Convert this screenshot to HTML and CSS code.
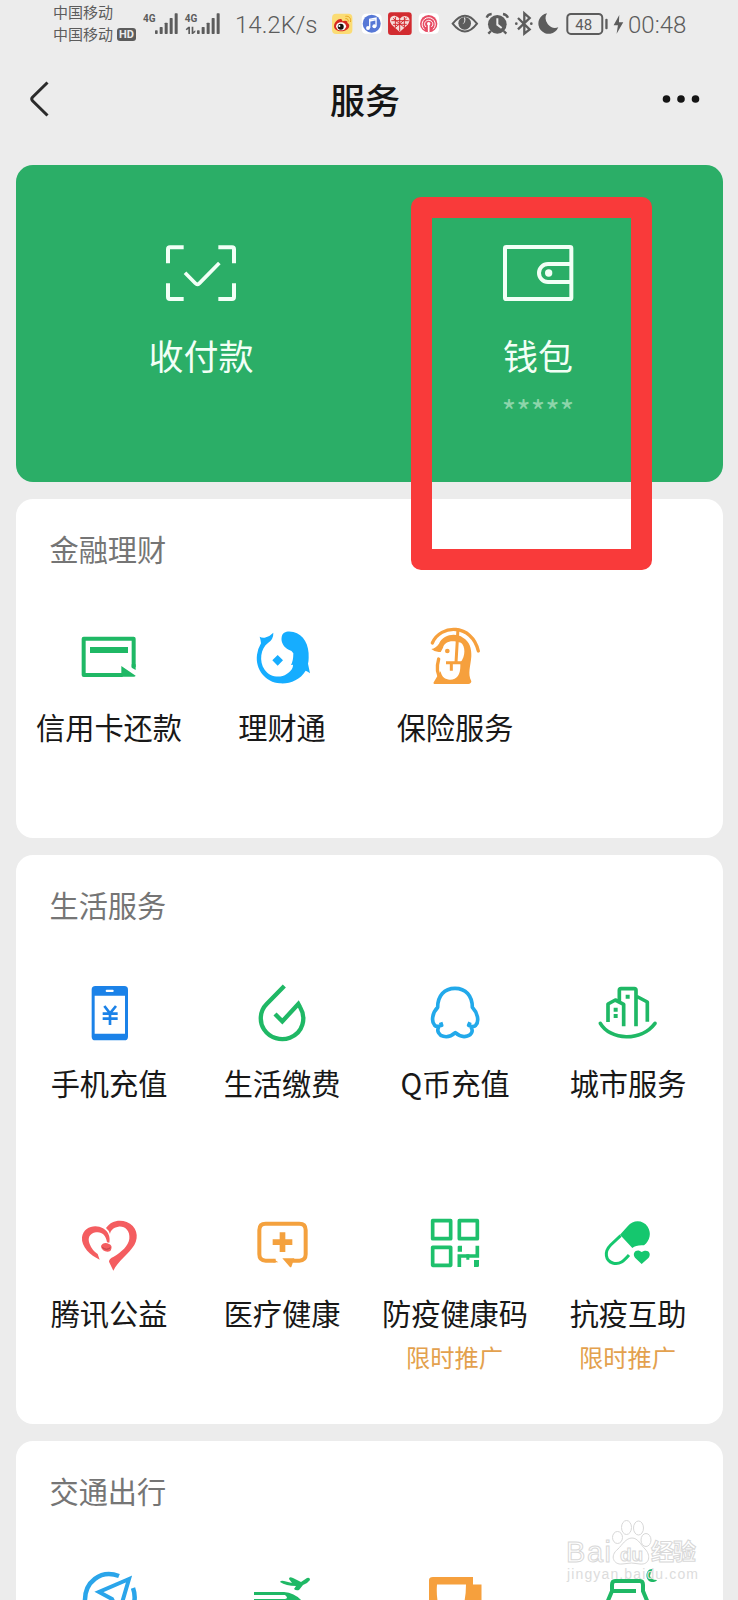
FILE: index.html
```html
<!DOCTYPE html>
<html lang="zh-CN">
<head>
<meta charset="utf-8">
<title>服务</title>
<link rel="stylesheet" href="styles.css">
</head>
<body>
<div class="screen">
  <header class="status">
    <div class="carriers">
      <div class="carrier">中国移动</div>
      <div class="carrier">中国移动<span class="hd">HD</span></div>
    </div>
    <svg class="signals" viewBox="306 30 240 80">
      <g fill="#5c5c5c">
        <text x="309" y="66" class="net">4G</text>
        <text x="434" y="66" class="net">4G</text>
        <rect x="345" y="91" width="8" height="11" rx="2"/><rect x="359" y="81" width="9" height="21" rx="2"/><rect x="374" y="68" width="9" height="34" rx="2"/><rect x="389" y="54" width="9" height="48" rx="2"/><rect x="404" y="40" width="9" height="62" rx="2"/>
        <rect x="471" y="91" width="8" height="11" rx="2"/><rect x="485" y="81" width="9" height="21" rx="2"/><rect x="500" y="68" width="9" height="34" rx="2"/><rect x="515" y="54" width="9" height="48" rx="2"/><rect x="530" y="40" width="9" height="62" rx="2"/>
        <path d="M437 88L445 80H450V102H445V87L440 91ZM455 80H460V95L466 91V96L459 102H455Z"/>
      </g>
    </svg>
    <span class="speed">14.2K/s</span>
    <svg class="tray" viewBox="30 30 885 80">
      <rect x="36" y="41" width="61" height="61" rx="12" fill="#fbdc74"/>
      <path d="M42 79C42 66 57 54 64 58C67 60 66 63 67 64C75 60 84 62 82 69C90 72 89 82 82 88C71 98 42 96 42 79Z" fill="#d5281f"/>
      <ellipse cx="63" cy="79" rx="15" ry="12" fill="#fff"/><circle cx="62" cy="80" r="9" fill="#18120f"/><circle cx="58" cy="78" r="3" fill="#fff"/>
      <path d="M76 49C87 47 94 55 91 66M76 56C83 55 86 60 84 65" fill="none" stroke="#e5a11c" stroke-width="3"/>
      <rect x="125" y="41" width="60" height="60" rx="13" fill="#fff"/><circle cx="155" cy="71" r="27" fill="#5778d6"/>
      <path d="M149 84V58L168 54V79M149 63L168 59" fill="none" stroke="#fff" stroke-width="4"/><circle cx="144" cy="84" r="6" fill="#fff"/><circle cx="163" cy="79" r="6" fill="#fff"/>
      <rect x="204" y="37" width="71" height="68" rx="9" fill="#d22b30"/>
      <path d="M239 96L215 74C203 58 214 45 226 48Q235 49 239 57Q245 48 254 48C267 48 274 60 263 74Z" fill="#f6dcda"/>
      <path d="M214 62H266M219 73H260M239 57V94M226 51V81M253 51V81M219 55L254 83M260 54L225 83" stroke="#d22b30" stroke-width="3" fill="none"/>
      <rect x="296" y="40" width="61" height="61" rx="13" fill="#fff"/><circle cx="326" cy="71" r="26" fill="#e74c64"/>
      <g fill="none" stroke="#fff" stroke-width="3"><path d="M313 88C300 76 307 53 326 53S352 76 339 88M318 81C309 73 315 61 326 61S343 73 334 81"/><path d="M326 70V97" stroke-width="5"/></g><circle cx="326" cy="71" r="5" fill="#fff"/>
      <path d="M398 71Q435 23 471 71Q435 118 398 71Z" fill="none" stroke="#5c5c5c" stroke-width="6"/><circle cx="434" cy="70" r="19" fill="#5c5c5c"/><path d="M434 51A15 15 0 0 1 427 73A16 16 0 0 0 432 55Z" fill="#ececec"/>
      <circle cx="532" cy="73" r="28" fill="#5c5c5c"/><path d="M500 53Q503 43 515 42M549 42Q560 44 564 53M513 93L505 101M551 93L559 101" fill="none" stroke="#5c5c5c" stroke-width="7"/><path d="M532 55V74L545 84" fill="none" stroke="#ececec" stroke-width="6"/>
      <path d="M594 54L629 88L613 101V40L629 54L594 88" fill="none" stroke="#5c5c5c" stroke-width="7"/><circle cx="589" cy="71" r="4" fill="#5c5c5c"/><circle cx="634" cy="71" r="4" fill="#5c5c5c"/>
      <path d="M681 40A31 31 0 1 0 715 82A29 29 0 0 1 681 40Z" fill="#5c5c5c"/>
      <rect x="742" y="42" width="105" height="60" rx="11" fill="none" stroke="#5c5c5c" stroke-width="6"/><rect x="856" y="56" width="7" height="32" rx="3" fill="#5c5c5c"/>
      <text x="766" y="89" class="level">48</text>
      <path d="M898 45L881 76H894L890 101L910 67H897Z" fill="#5c5c5c"/>
    </svg>
    <span class="time">00:48</span>
  </header>

  <nav class="navbar">
    <svg class="back" viewBox="0 0 24 40"><path d="M20.500 3.500L5.500 18.300Q4 20 5.500 21.700L20.500 36.500" fill="none" stroke="#2b2b2b" stroke-width="3"/></svg>
    <h1 class="title">服务</h1>
    <svg class="more" viewBox="0 0 40 10" fill="#151515"><circle cx="5.500" cy="5" r="3.800"/><circle cx="20" cy="5" r="3.800"/><circle cx="34.500" cy="5" r="3.800"/></svg>
  </nav>

  <main class="cards">
    <section class="pay">
      <div class="pay-item">
        <svg class="pay-icon" viewBox="104 68 216 180" fill="none" stroke="#f2fff6" stroke-width="12"><path d="M113 129V87Q113 81 119 81H160M264 81H305Q311 81 311 87V129M311 189V230Q311 236 305 236H264M160 236H119Q113 236 113 230V189"/><path d="M164 157L195 189Q201 195 207 189L267 128" stroke-width="11"/></svg>
        <span class="pay-label">收付款</span>
      </div>
      <div class="pay-item">
        <svg class="pay-icon" viewBox="303 189 216 180" fill="none" stroke="#f2fff6" stroke-width="12"><rect x="312" y="201" width="199" height="156" rx="4"/><path d="M511 252H441A27 27 0 0 0 441 306H511"/><circle cx="443" cy="279" r="11" fill="#f2fff6" stroke="none"/></svg>
        <span class="pay-label">钱包</span>
        <span class="stars">*****</span>
      </div>
    </section>

    <section class="card">
      <h2 class="heading">金融理财</h2>
      <div class="grid">
        <div class="item">
          <svg class="icon" viewBox="141 77 192 192"><path d="M311 203V118H161V227H278" fill="none" stroke="#1fb865" stroke-width="12" stroke-linejoin="round"/><path d="M180 143H294V161H180ZM274 200L317 229Q316 232 311 232H274ZM305 195H317V212L305 205Z" fill="#1fb865"/></svg>
          <span class="label">信用卡还款</span>
        </div>
        <div class="item">
          <svg class="icon" viewBox="660 77 192 192"><path d="M689 112Q694 116 704 115Q719 112 730 100Q731 119 714 131C692 146 686 187 704 211C719 233 750 238 770 224C786 213 789 205 789 196L783 197Q790 185 790 162Q786 153 776 151C762 145 752 129 755 113C757 97 774 94 790 98C821 105 838 137 836 175Q836 185 834 193L840 222Q833 216 827 214C810 242 780 254 750 252C707 249 675 210 681 166Q684 147 693 132Q692 121 689 112ZM743 167L759 183L743 199L727 183Z" fill="#16adff"/></svg>
          <span class="label">理财通</span>
        </div>
        <div class="item">
          <svg class="icon" viewBox="129 77 192 192"><path d="M154 149Q168 146 177 133C189 106 226 99 249 115C269 126 275 148 274 171C272 201 262 222 274 246Q274 253 265 254H167Q157 254 162 247L174 227L190 205L189 158H176Q164 158 154 149Z" fill="#f6a03d"/><path d="M224 126C205 124 192 132 189 145L181 160V213C184 233 196 241 210 241C232 241 241 225 241 200V190C258 170 256 140 243 130Z" fill="#fff"/><g fill="none" stroke="#f6a03d" stroke-width="10"><path d="M157 131C181 74 276 72 295 155M176 179C169 204 170 225 184 240" stroke-linecap="round"/><path d="M234 87L228 190M198 190H246M214 190V214" stroke-width="9"/></g><circle cx="202" cy="155" r="7" fill="#f6a03d"/></svg>
          <span class="label">保险服务</span>
        </div>
      </div>
    </section>

    <section class="card">
      <h2 class="heading">生活服务</h2>
      <div class="grid">
        <div class="item">
          <svg class="icon" viewBox="111 60 192 192"><rect x="155" y="75" width="109" height="163" rx="11" fill="#1b82e8"/><path d="M164 104H255V218H164Z" fill="#fff"/><rect x="197" y="86" width="24" height="7" rx="3" fill="#fff"/><path d="M193 135L210 157L228 135M210 157V192M188 158H233M188 173H233" fill="none" stroke="#1b82e8" stroke-width="8"/></svg>
          <span class="label">手机充值</span>
        </div>
        <div class="item">
          <svg class="icon" viewBox="630 60 192 192"><path d="M733 75L680 129C658 151 658 184 672 205C690 232 723 240 750 230C789 216 800 171 780 138L775 129L727 181L705 159" fill="none" stroke="#1fb865" stroke-width="13"/></svg>
          <span class="label">生活缴费</span>
        </div>
        <div class="item">
          <svg class="icon" viewBox="129 60 192 192"><path d="M182 184L185 193Q170 199 164 193C153 181 157 155 173 139C173 104 193 82 225 82S277 104 277 139C292 155 299 180 287 193Q280 200 266 193L270 184M176 198C169 210 178 223 190 226Q208 231 226 215Q244 231 262 225C276 221 280 209 273 198" fill="none" stroke="#22a9ea" stroke-width="11" stroke-linejoin="round"/></svg>
          <span class="label">Q币充值</span>
        </div>
        <div class="item">
          <svg class="icon" viewBox="648 60 192 192"><g fill="none" stroke="#1fb865" stroke-width="11" stroke-linejoin="round"><path d="M684 183V129L706 117L731 130V196M718 119V88Q718 83 723 83H763Q768 83 768 88V196M768 105L802 123V182"/><path d="M661 187C691 239 784 242 825 187" stroke-linecap="round"/></g><path d="M737 101H749V113H737ZM701 140H713V152H701ZM701 159H713V171H701Z" fill="#1fb865"/></svg>
          <span class="label">城市服务</span>
        </div>
        <div class="item">
          <svg class="icon" viewBox="111 61 192 192"><path d="M179 207C151 195 123 168 126 140C130 107 168 99 189 113C207 124 211 141 208 156L201 155C198 132 184 122 168 125C148 128 142 143 149 160Q156 179 173 190ZM198 112C212 91 238 85 260 94C290 106 298 137 283 163C266 191 235 210 220 240L207 213Q207 204 221 198C244 184 266 165 268 144C271 119 253 105 235 108C219 111 212 119 210 130Q206 118 198 112ZM183 166C187 157 197 155 207 160C217 163 216 173 211 181C200 187 184 180 183 166Z" fill="#f45d60"/><path d="M187 170Q199 181 211 171" stroke="#b83e45" stroke-width="3" fill="none"/></svg>
          <span class="label">腾讯公益</span>
        </div>
        <div class="item">
          <svg class="icon" viewBox="630 61 192 192"><path d="M707 210H677Q658 210 658 191V118Q658 99 677 99H778Q797 99 797 118V191Q797 210 778 210H757" fill="none" stroke="#f4a13e" stroke-width="12"/><path d="M719 125H736V146H757V163H736V184H719V163H698V146H719ZM699 204L715 215H699ZM727 203H763L754 229Q752 231 749 228Z" fill="#f4a13e"/></svg>
          <span class="label">医疗健康</span>
        </div>
        <div class="item">
          <svg class="icon" viewBox="159 61 192 192"><g fill="none" stroke="#1ec06c" stroke-width="11"><path d="M188 90H242V144H188ZM268 90H322V144H268ZM188 170H242V224H188Z" stroke-linejoin="round"/><path d="M263 196H322V165M268 191V229"/></g><path d="M263 168Q263 165 267 165H276V183H263ZM312 208H327V225Q327 229 323 229H312ZM289 191H298V207H289Z" fill="#1ec06c"/></svg>
          <span class="label">防疫健康码</span>
          <span class="sub">限时推广</span>
        </div>
        <div class="item">
          <svg class="icon" viewBox="678 61 192 192"><path d="M750 132L773 107C791 85 820 89 833 108C845 127 840 149 822 164Q799 162 787 172Z" fill="#15c76e"/><path d="M752 135L722 163C701 184 707 210 728 217C749 224 762 210 777 193" fill="none" stroke="#15c76e" stroke-width="9"/><path d="M815 220L795 201C786 188 796 177 808 180L815 184C832 173 846 186 836 201Z" fill="#15c76e"/></svg>
          <span class="label">抗疫互助</span>
          <span class="sub">限时推广</span>
        </div>
      </div>
    </section>

    <section class="card">
      <h2 class="heading">交通出行</h2>
      <div class="grid">
        <div class="item"><svg class="icon" viewBox="0 0 64 64"><path d="M42 9C24 2 7 15 8 35C9 49 20 57 32 57M56 21Q61 35 51 48" fill="none" stroke="#2aa5ea" stroke-width="4.500"/><path d="M52 12L22 25L35 32L42 46Z" fill="none" stroke="#2aa5ea" stroke-width="4"/></svg></div>
        <div class="item"><svg class="icon" viewBox="0 0 64 64"><path d="M4 25H34Q45 26 52 34V42H35V35H4V32H35Q39 31 35 28H4Z" fill="#1fb865"/><path d="M30 15Q31 13 34 14L42 16L39 12Q39 9 43 11L51 15L57 11Q60 10 60 13Q58 16 53 18L49 23Q46 24 44 22L46 19Q36 19 30 15Z" fill="#1fb865"/></svg></div>
        <div class="item"><svg class="icon" viewBox="0 0 64 64"><path d="M6 13Q6 10 10 10H50V17.500H58.500V35L55 45H6ZM14 17.500Q13 30 16 40H40Q43 30 43 17.500Z" fill="#f6a03d" fill-rule="evenodd"/></svg></div>
        <div class="item"><svg class="icon" viewBox="0 0 64 64"><path d="M11 36L16 24V18Q16 14 19 14H44Q47 14 47 18V24L52 36M16 24H40" fill="none" stroke="#1fb865" stroke-width="4"/><path d="M57 2C49 1 48 14 56 15Q60 15 61 13Q55 13 54 9Q54 5 57 2Z" fill="#1fb865"/></svg></div>
      </div>
    </section>
  </main>

  <div class="highlight"></div>
  <svg class="watermark" viewBox="0 0 140 66">
    <g fill="#fff" fill-opacity=".8" stroke="#d8d8d8" stroke-width="1">
      <text x="0" y="44" class="wm-brand" textLength="45">Bai</text>
      <ellipse cx="51.500" cy="19.500" rx="5" ry="6"/><ellipse cx="60.500" cy="9.500" rx="5" ry="7"/><ellipse cx="72.500" cy="10" rx="5" ry="7"/><ellipse cx="80" cy="22" rx="5" ry="6.500"/>
      <path d="M66 20C60 20 56 27 52 31C43 38 48 47 56 46Q66 44 74 46C84 47 85 37 79 31C75 27 72 20 66 20Z"/>
      <text x="54" y="43" class="wm-du">du</text>
      <text x="85" y="42" class="wm-cn" textLength="45">经验</text>
    </g>
    <text x="1" y="61" class="wm-url" textLength="131">jingyan.baidu.com</text>
  </svg>
</div>
</body>
</html>
```
FILE: styles.css
```css
* { box-sizing: border-box; }
body { margin: 0; background: #ececec; font-family: "Noto Sans CJK SC", sans-serif; }
svg { display: block; flex: none; }
.screen { position: relative; width: 738px; height: 1600px; overflow: hidden; background: #ececec; }

.status { display: flex; align-items: flex-start; height: 50px; padding-left: 53px; color: #5c5c5c; }
.carriers { width: 89px; padding-top: 1px; }
.carrier { display: flex; align-items: center; height: 22px; font-size: 15px; line-height: 22px; white-space: nowrap; }
.hd { width: 19px; height: 13px; margin-left: 4px; border-radius: 3px; background: #5c5c5c; color: #ececec; font: bold 11px/13px "Roboto", sans-serif; text-align: center; }
.signals { width: 80px; height: 26.667px; margin-top: 10px; }
.net { font: bold 30px "Roboto", sans-serif; }
.speed { width: 95px; margin-left: 13px; font: 300 24px/51px "Roboto", sans-serif; white-space: nowrap; }
.tray { width: 295px; height: 26.667px; margin-top: 10px; }
.level { font: 45px "Roboto", sans-serif; fill: #5c5c5c; }
.time { margin-left: 3px; font: 300 24px/51px "Roboto", sans-serif; white-space: nowrap; }

.navbar { display: flex; align-items: center; justify-content: space-between; height: 97px; padding: 0 37px 0 27px; }
.back { width: 24px; height: 40px; }
.title { margin: 0 0 0 18px; font-size: 35px; font-weight: 500; line-height: 50px; color: #151515; }
.more { width: 40px; height: 10px; }

.cards { display: flex; flex-direction: column; gap: 17px; margin-top: 18px; padding: 0 15.500px; }
.pay { display: flex; height: 317px; padding: 0 16px 0 17px; border-radius: 17px; background: #2bae67; color: #f2fff6; }
.pay-item { display: flex; flex: 1; flex-direction: column; align-items: center; padding-top: 78px; }
.pay-icon { width: 72px; height: 60px; }
.pay-label { margin-top: 26px; font-size: 35px; line-height: 52px; }
.stars { margin-top: 10px; font-size: 31px; line-height: 40px; color: #8cd5aa; }

.card { border-radius: 17px; background: #fff; }
.heading { height: 108px; margin: 0; padding: 29px 34px 0; font-size: 29.200px; font-weight: 400; line-height: 40px; color: #757575; }
.grid { display: grid; grid-template-columns: repeat(4, 173px); grid-auto-rows: 230.500px; padding-left: 6.500px; }
.item { display: flex; flex-direction: column; align-items: center; padding-top: 18px; }
.icon { width: 64px; height: 64px; }
.label { margin: 17px 0 0 1px; font-size: 29.200px; line-height: 40px; color: #181818; white-space: nowrap; }
.sub { margin-top: 9px; font-size: 24.300px; line-height: 32px; color: #e3a14e; }

.highlight { position: absolute; left: 411px; top: 197px; width: 241px; height: 373px; border: 21px solid #f93a3a; border-radius: 10px; }
.watermark { position: absolute; left: 566px; top: 1518px; width: 140px; height: 66px; }
.wm-brand { font: 29px "Liberation Sans", sans-serif; }
.wm-du { font: bold 19px "Liberation Sans", sans-serif; }
.wm-cn { font: bold 23px "Noto Sans CJK SC", sans-serif; }
.wm-url { font: 14px "Liberation Sans", sans-serif; fill: #dcdcdc; }
```
